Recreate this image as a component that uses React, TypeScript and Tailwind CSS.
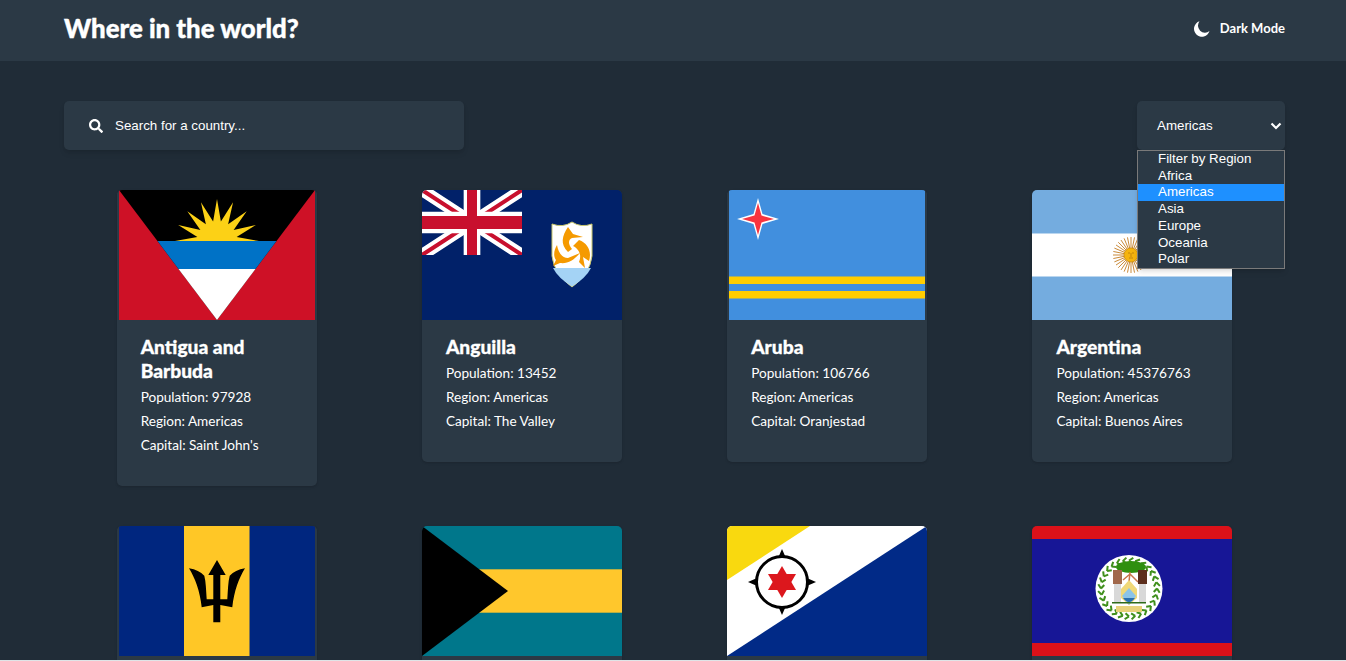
import { FaSearch } from "react-icons/fa";

const sans = "font-['Lato','Noto_Sans',sans-serif]";

function sunRays(cx: number, cy: number, n: number, r1: number, r2: number, from = 0, to = 360) {
  const pts: string[] = [];
  for (let i = 0; i <= n * 2; i++) {
    const a = ((from + ((to - from) * i) / (n * 2)) * Math.PI) / 180;
    const r = i % 2 === 0 ? r2 : r1;
    pts.push(`${cx + r * Math.cos(a)},${cy + r * Math.sin(a)}`);
  }
  return pts.join(" ");
}

function Antigua() {
  return (
    <svg viewBox="0 0 200 130" className="block h-full w-full">
      <rect width="200" height="130" fill="#2b3945" />
      <rect x="2" width="196" height="130" fill="#ce1126" />
      <polygon points="2,0 198,0 100,130" fill="#000" />
      <polygon points={sunRays(100, 51, 8, 20, 42, 180, 360)} fill="#fcd116" />
      <polygon points="40.500,51 159.500,51 138.500,79 61.500,79" fill="#0072c6" />
      <polygon points="61.500,79 138.500,79 100,130" fill="#fff" />
    </svg>
  );
}

function Anguilla() {
  return (
    <svg viewBox="0 0 200 130" className="block h-full w-full">
      <rect width="200" height="130" fill="#012169" />
      <svg x="0" y="0" width="100" height="65" viewBox="0 0 60 30" preserveAspectRatio="none">
        <rect width="60" height="30" fill="#012169" />
        <path d="M0,0 60,30 M60,0 0,30" stroke="#fff" strokeWidth="6" />
        <path d="M0,0 60,30 M60,0 0,30" stroke="#c8102e" strokeWidth="2" />
        <path d="M30,0 V30 M0,15 H60" stroke="#fff" strokeWidth="10" />
        <path d="M30,0 V30 M0,15 H60" stroke="#c8102e" strokeWidth="6" />
      </svg>
      <path d="M130,34 Q141,38 150,32 Q159,38 170,34 V66 Q168,84 150,97 Q132,84 130,66 Z" fill="#fff" stroke="#c9c76a" strokeWidth="1" />
      <path d="M131,78 H169 Q164,88 150,96.500 Q136,88 131,78 Z" fill="#a4d3f5" />
      <g fill="#f59a00">
        <path d="M146,37 C140,46 138,54 146,62 L150,59 C146,54 146,50 150,48 L161,47 L151,44 Z" />
        <path d="M157,50 C166,53 170,62 167,71 L161,67 L163,78 L157,72 C160,65 157,59 151,56 Z" />
        <path d="M135,55 C136,62 140,68 146,68 L158,63 C152,70 146,74 138,73 L131,76 L134,70 C131,66 132,60 135,55 Z" />
      </g>
    </svg>
  );
}

function Aruba() {
  return (
    <svg viewBox="0 0 200 130" className="block h-full w-full">
      <rect width="200" height="130" fill="#2b3945" />
      <rect x="2" width="196" height="130" fill="#418fde" />
      <rect x="2" y="86.500" width="196" height="7.500" fill="#ffcd00" />
      <rect x="2" y="101" width="196" height="7.500" fill="#ffcd00" />
      <polygon points="31,8 35.500,24 52,29 35.500,34 31,50 26.500,34 10,29 26.500,24" fill="#fff" />
      <polygon points="31,13 34.500,25.500 47,29 34.500,32.500 31,45 27.500,32.500 15,29 27.500,25.500" fill="#f9343f" />
    </svg>
  );
}

function Argentina() {
  const rays = Array.from({ length: 32 }, (_, i) => (i * Math.PI) / 16);
  return (
    <svg viewBox="0 0 200 130" className="block h-full w-full">
      <rect width="200" height="130" fill="#74acdf" />
      <rect y="43.500" width="200" height="43" fill="#fff" />
      {rays.map((a, i) => (
        <line
          key={i}
          x1={99 + 6 * Math.cos(a)}
          y1={65 + 6 * Math.sin(a)}
          x2={99 + 18 * Math.cos(a)}
          y2={65 + 18 * Math.sin(a)}
          stroke="#c98a3a"
          strokeWidth="1"
        />
      ))}
      <circle cx="99" cy="65" r="7" fill="#f6b40e" stroke="#c98a0b" strokeWidth="0.7" />
      <path d="M96,63 H98 M100,63 H102 M99,63 V67 M97,68 H101" stroke="#b0720a" strokeWidth="0.7" />
    </svg>
  );
}

function Barbados() {
  return (
    <svg viewBox="0 0 200 130" className="block h-full w-full">
      <rect width="200" height="130" fill="#2b3945" />
      <rect x="2" width="196" height="130" fill="#00267f" />
      <rect x="67" width="65.500" height="130" fill="#ffc726" />
      <path
        d="M100,34 L108.700,49 H103.300 V73.300 H110.300 C111,64 111,56 112.700,49.700 Q118,44 128,42.300 C122,52 117,65 115.300,81.300 L103.300,79 V96.300 H96.300 V79 L84.700,81.300 C83,65 78,52 72,42.300 Q82,44 87.300,49.700 C89,56 89,64 89.700,73.300 H96.300 V49 H91.300 Z"
        fill="#000"
      />
    </svg>
  );
}

function Bahamas() {
  return (
    <svg viewBox="0 0 200 130" className="block h-full w-full">
      <rect width="200" height="130" fill="#00778b" />
      <rect y="43.300" width="200" height="43.400" fill="#ffc72c" />
      <polygon points="0,0 86,65 0,130" fill="#000" />
    </svg>
  );
}

function Bonaire() {
  return (
    <svg viewBox="0 0 200 130" className="block h-full w-full">
      <rect width="200" height="130" fill="#fff" />
      <polygon points="0,0 83,0 0,54" fill="#f9d90f" />
      <polygon points="200,0 200,130 0,130" fill="#012a87" />
      <circle cx="55" cy="56" r="25.500" fill="#fff" stroke="#000" strokeWidth="3" />
      <polygon points="55,23 58.500,31 51.500,31" fill="#000" />
      <polygon points="55,89 58.500,81 51.500,81" fill="#000" />
      <polygon points="21,56 29,52.500 29,59.500" fill="#000" />
      <polygon points="89,56 81,52.500 81,59.500" fill="#000" />
      <polygon points="55,40 69,64 41,64" fill="#dc171d" />
      <polygon points="55,72 69,48 41,48" fill="#dc171d" />
    </svg>
  );
}

function Belize() {
  const leaves = Array.from({ length: 28 }, (_, i) => (i * Math.PI) / 14);
  return (
    <svg viewBox="0 0 200 130" className="block h-full w-full">
      <rect width="200" height="130" fill="#db1119" />
      <rect y="13" width="200" height="104" fill="#171696" />
      <circle cx="97" cy="62.500" r="33.500" fill="#fff" />
      {leaves.map((a, i) => (
        <g key={i} stroke="#3f8f1c" strokeWidth="2">
          <line
            x1={97 + 28 * Math.cos(a)}
            y1={62.5 + 28 * Math.sin(a)}
            x2={97 + 31 * Math.cos(a + 0.14)}
            y2={62.5 + 31 * Math.sin(a + 0.14)}
          />
          <line
            x1={97 + 28 * Math.cos(a)}
            y1={62.5 + 28 * Math.sin(a)}
            x2={97 + 25 * Math.cos(a + 0.14)}
            y2={62.5 + 25 * Math.sin(a + 0.14)}
          />
        </g>
      ))}
      <ellipse cx="99" cy="41" rx="15" ry="6" fill="#2f8f0f" />
      <path d="M98,46 L97,56 M98,48 L91,54 M98,48 L106,56" stroke="#c9744a" strokeWidth="1.500" />
      <rect x="81" y="44" width="9" height="14" fill="#a0674a" />
      <rect x="82" y="58" width="7" height="18" fill="#d8d8d8" />
      <rect x="106" y="44" width="9" height="14" fill="#5c2e1c" />
      <rect x="107" y="58" width="7" height="18" fill="#d8d8d8" />
      <polygon points="97,54 105,63 105,72 97,79 89,72 89,63" fill="#f0d878" />
      <polygon points="97,62 104,70 97,79 90,70" fill="#8cc4e8" />
      <path d="M91,72 Q97,80 103,72 Z" fill="#2b6fb0" />
      <rect x="80" y="76" width="34" height="1.500" fill="#2f6b1a" />
      <rect x="84" y="80" width="26" height="6" fill="#e8d27a" />
    </svg>
  );
}

type Country = {
  name: string;
  population?: number;
  capital?: string;
  flag: React.ReactNode;
};

const countries: Country[] = [
  { name: "Antigua and Barbuda", population: 97928, capital: "Saint John's", flag: <Antigua /> },
  { name: "Anguilla", population: 13452, capital: "The Valley", flag: <Anguilla /> },
  { name: "Aruba", population: 106766, capital: "Oranjestad", flag: <Aruba /> },
  { name: "Argentina", population: 45376763, capital: "Buenos Aires", flag: <Argentina /> },
  // second row runs off the bottom of the window, only the flags show
  { name: "Barbados", flag: <Barbados /> },
  { name: "Bahamas", flag: <Bahamas /> },
  { name: "Bonaire", flag: <Bonaire /> },
  { name: "Belize", flag: <Belize /> },
];

const regions = ["Filter by Region", "Africa", "Americas", "Asia", "Europe", "Oceania", "Polar"];

function CountryCard({ country }: { country: Country }) {
  return (
    <div className="w-[200px] overflow-hidden rounded-[5px] bg-[#2b3945] shadow-sm">
      <div className="h-[130px]">{country.flag}</div>
      {country.population ? (
        <div className={`${sans} px-6 pt-[15px] pb-[29px]`}>
          <h2 className="mb-[2px] text-[19.200px] leading-6 font-black [-webkit-text-stroke:0.3px_white]">
            {country.name}
          </h2>
          <p className="text-[13.600px] leading-6">Population: {country.population}</p>
          <p className="text-[13.600px] leading-6">Region: Americas</p>
          <p className="text-[13.600px] leading-6">Capital: {country.capital}</p>
        </div>
      ) : (
        <div className="h-10" />
      )}
    </div>
  );
}

export default function App() {
  return (
    <div className="h-[661px] overflow-hidden bg-[#202c37] text-white">
      <header className="flex h-[61px] items-center justify-between bg-[#2b3945] pr-[61px] pl-16">
        <h1 className={`${sans} mb-[4px] text-[25.800px] font-black [-webkit-text-stroke:0.4px_white]`}>
          Where in the world?
        </h1>
        <div className="mb-[4px] flex items-center gap-[10px]">
          <svg viewBox="0 0 17 16" className="h-4 w-[17px]" fill="currentColor">
            <path d="M6.500,0.300 A7.900,7.900 0 1 0 16.500,10 A7,7 0 0 1 6.500,0.300 Z" />
          </svg>
          <span className={`${sans} text-[13px] font-bold`}>Dark Mode</span>
        </div>
      </header>

      <main className="h-[599px] overflow-hidden pt-10 pr-[61px] pl-16">
        <div className="flex items-start justify-between">
          <div className="flex h-[49px] w-[400px] items-center gap-3 rounded-[5px] bg-[#2b3945] pl-[25px] font-['Liberation_Sans',sans-serif] text-[13.330px] shadow-md">
            <FaSearch size={14} />
            <span>Search for a country...</span>
          </div>

          <div className="relative w-[148px] font-['Liberation_Sans',sans-serif] text-[13.330px]">
            <div className="flex h-[49px] items-center justify-between rounded-[5px] bg-[#2b3945] pr-[3px] pl-5 shadow-md">
              <span>Americas</span>
              <svg viewBox="0 0 12 8" className="h-2 w-3" fill="none" stroke="currentColor" strokeWidth="2.200">
                <path d="M1.500,1.500 6,6 10.500,1.500" />
              </svg>
            </div>
            <ul className="absolute top-[49px] left-0 z-10 w-full border border-[#7a7a7a] bg-[#2b3945] shadow-md">
              {regions.map((r) => (
                <li
                  key={r}
                  className={`h-[16.710px] pl-5 leading-[15px] ${r === "Americas" ? "bg-[#1e90ff]" : ""}`}
                >
                  {r}
                </li>
              ))}
            </ul>
          </div>
        </div>

        <div className="mt-10 grid grid-cols-4 items-start gap-y-10">
          {countries.map((c) => (
            <div key={c.name} className="flex justify-center">
              <CountryCard country={c} />
            </div>
          ))}
        </div>
      </main>
      <div className="h-px bg-[#dfe4e7]" />
    </div>
  );
}
